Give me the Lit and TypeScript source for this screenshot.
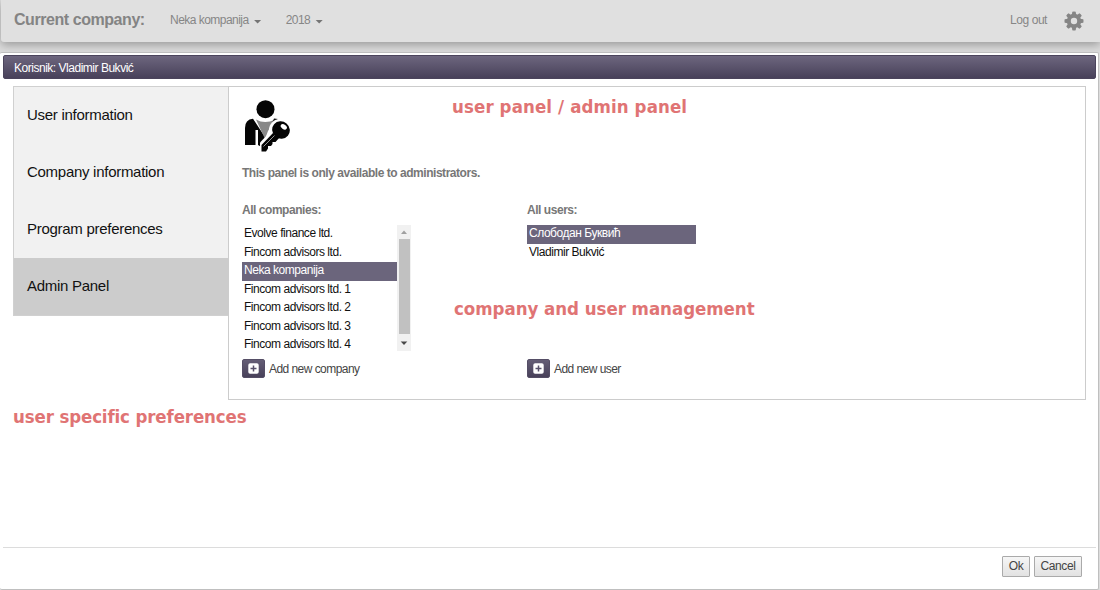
import { LitElement, html, css, svg } from "lit";
import { customElement, property, state } from "lit/decorators.js";
import { classMap } from "lit/directives/class-map.js";

const gearTeeth = [0, 45, 90, 135, 180, 225, 270, 315];

@customElement("item-list")
class ItemList extends LitElement {
  @property({ attribute: false }) items: string[] = [];
  @property({ type: Number }) selected = 0;
  @property({ type: Boolean }) scroll = false;

  static styles = css`
    :host { display: flex; height: 127px; }
    .rows { flex: 1; overflow: hidden; }
    .row { height: 18.5px; line-height: 17px; padding-left: 2px; font-size: 12px; letter-spacing: -0.46px; color: #111; white-space: nowrap; box-sizing: border-box; }
    .row.selected { background: #6b657c; color: #fff; }
    .bar { width: 14px; height: 126px; background: #f1f1f1; display: flex; flex-direction: column; align-items: center; }
    .thumb { width: 11px; height: 95px; background: #c1c1c1; }
    .arrow { display: block; width: 14px; height: 14px; }
    .last { height: 17px; }
  `;

  render() {
    return html`
      <div class="rows">
        ${this.items.map((t, i) => html`<div class=${classMap({ row: true, selected: i === this.selected })} @click=${() => (this.selected = i)}>${t}</div>`)}
      </div>
      ${this.scroll
        ? html`<div class="bar">
            <svg class="arrow" viewBox="0 0 14 14"><path d="M4 9 7 5.5 10 9z" fill="#a0a0a0" /></svg>
            <div class="thumb"></div>
            <svg class="arrow last" viewBox="0 0 14 17"><path d="M3.7 7.5h6.6L7 11z" fill="#484848" /></svg>
          </div>`
        : ""}
    `;
  }
}

@customElement("add-button")
class AddButton extends LitElement {
  @property() label = "";

  static styles = css`
    :host { display: flex; align-items: center; height: 19px; }
    .box { width: 23px; height: 19px; border-radius: 2px; background: linear-gradient(#645d75, #48415a); border: 1px solid #554e66; box-sizing: border-box; display: flex; align-items: center; justify-content: center; }
    .plus { display: block; width: 11px; height: 11px; }
    .label { margin-left: 4px; padding-top: 2px; font-size: 12px; letter-spacing: -0.55px; color: #444; line-height: 19px; white-space: nowrap; }
  `;

  render() {
    return html`
      <div class="box"><svg class="plus" viewBox="0 0 11 11"><rect x=".3" y=".3" width="10.4" height="10.4" rx="1.8" fill="#fff" /><path d="M5.5 2.5v6M2.5 5.5h6" stroke="#57506a" stroke-width="1.5" /></svg></div>
      <span class="label">${this.label}</span>
    `;
  }
}

@customElement("app-root")
class AppRoot extends LitElement {
  @state() tab = 3;
  tabs = ["User information", "Company information", "Program preferences", "Admin Panel"];
  companies = ["Evolve finance ltd.", "Fincom advisors ltd.", "Neka kompanija", "Fincom advisors ltd. 1", "Fincom advisors ltd. 2", "Fincom advisors ltd. 3", "Fincom advisors ltd. 4"];
  users = ["Слободан Буквић", "Vladimir Bukvić"];

  static styles = css`
    :host { display: flex; flex-direction: column; position: relative; width: 1100px; height: 590px; overflow: hidden; background: #dcdcdc; font-family: "Liberation Sans", Arial, sans-serif; box-sizing: border-box; }
    .top { height: 42px; flex: none; margin-left: 1px; background: #e0e0e0; border-radius: 0 0 0 3px; box-shadow: 0 3px 10px rgba(0, 0, 0, 0.3); display: flex; align-items: center; padding: 0 16px 2px 13px; box-sizing: border-box; color: #868686; font-size: 12px; }
    .brand { font-weight: bold; font-size: 16px; letter-spacing: -0.44px; width: 156px; color: #848484; }
    .drop { display: flex; align-items: center; letter-spacing: -0.53px; white-space: nowrap; }
    .year { margin-left: 24px; }
    .caret { margin: 3px 0 0 5px; width: 8px; height: 4px; background: #757575; clip-path: polygon(0 0, 100% 0, 50% 100%); }
    .logout { margin-left: auto; letter-spacing: -0.45px; }
    .gear { width: 20px; height: 20px; margin: 1px 0 0 17px; display: block; }
    .dialog { margin: 10px 1px 0 0; height: 538px; flex: none; background: #fff; border: 1px solid #bfbfbf; border-left: 0; border-radius: 2px; box-sizing: border-box; padding: 2px 2px 0 3px; display: flex; flex-direction: column; position: relative; }
    .title { height: 24px; flex: none; box-sizing: border-box; border: 1px solid #4b445c; border-radius: 2px; background: linear-gradient(#6d667e, #48415a); color: #fff; font-size: 12px; letter-spacing: -0.48px; line-height: 24px; padding-left: 10px; white-space: nowrap; }
    .body { display: flex; align-items: flex-start; margin: 7px 10px 0; }
    .tabs { width: 215px; height: 230px; box-sizing: border-box; border: 1px solid #d0d0d0; border-right: 0; background: #f1f1f1; display: grid; grid-template-rows: repeat(4, 57px); }
    .tab { padding-left: 13px; line-height: 55px; font-size: 15px; letter-spacing: -0.28px; color: #111; }
    .tab.active { background: #ccc; }
    .panel { flex: 1; height: 314px; box-sizing: border-box; border: 1px solid #ccc; padding: 12px 13px 0; color: #777; }
    .person { display: block; width: 49px; height: 54px; }
    .strong { font-size: 12px; font-weight: bold; line-height: 14px; letter-spacing: -0.46px; white-space: nowrap; }
    .note { margin-top: 13px; }
    .columns { display: grid; grid-template-columns: 169px 169px; column-gap: 116px; margin-top: 23px; }
    .list { margin: 8px 0 7px; }
    .foot { margin-top: auto; height: 42px; border-top: 1px solid #dcdcdc; display: flex; justify-content: flex-end; padding: 8px 14px 0 0; box-sizing: border-box; gap: 4px; }
    .button { height: 21px; box-sizing: border-box; border: 1px solid #aaa; border-radius: 1px; background: linear-gradient(#f6f6f6, #e2e2e2); color: #444; font-size: 12px; font-family: inherit; padding: 0 0 1px; letter-spacing: -0.4px; }
    .ok { width: 28px; }
    .cancel { width: 48px; }
    .mark { position: absolute; font-family: "DejaVu Sans Condensed", "DejaVu Sans", sans-serif; font-stretch: condensed; font-weight: bold; font-size: 18.5px; line-height: 24px; color: #e07474; white-space: nowrap; font-variant-ligatures: none; }
    .mark-panel { left: 452px; top: 95px; letter-spacing: 0.11px; }
    .mark-manage { left: 454px; top: 297px; letter-spacing: -0.03px; }
    .mark-prefs { left: 13px; top: 405px; letter-spacing: -0.13px; }
  `;

  render() {
    return html`
      <header class="top">
        <span class="brand">Current company:</span>
        <span class="drop">Neka kompanija<i class="caret"></i></span>
        <span class="drop year">2018<i class="caret"></i></span>
        <span class="logout">Log out</span>
        <svg class="gear" viewBox="0 0 20 20" fill="#858585">
          ${gearTeeth.map((a) => svg`<path d="M7.8 4 8.3.7Q10 .2 11.7.7L12.2 4z" transform="rotate(${a} 10 10)" />`)}
          <circle cx="10" cy="10" r="5.2" fill="none" stroke="#858585" stroke-width="4" />
        </svg>
      </header>
      <main class="dialog">
        <div class="title">Korisnik: Vladimir Bukvić</div>
        <div class="body">
          <nav class="tabs">
            ${this.tabs.map((t, i) => html`<div class=${classMap({ tab: true, active: i === this.tab })} @click=${() => (this.tab = i)}>${t}</div>`)}
          </nav>
          <section class="panel">
            <svg class="person" viewBox="0 0 49 54">
              <circle cx="23.5" cy="10.2" r="9" fill="#050505" />
              <path d="M3 46V29Q3 20.5 11 19.8L23 38V50L16 46V31H13.5V46z" fill="#050505" />
              <path d="M14 20.5q9 5 19 0L26 32l-3 8z" fill="#888" />
              <path d="M32 19.5l4 .5-4 4-4 5z" fill="#111" />
              <circle cx="38" cy="31" r="11" fill="#fff" />
              <path d="M29 32 18 43.5V54h10L42 40z" fill="#fff" />
              <ellipse cx="39" cy="31" rx="9" ry="8.6" transform="rotate(40 39 31)" fill="#050505" />
              <path d="M31 34 19.5 46v6.5h4.5l2-3v-2.5h3l1.5-2V43h3l4-4.5z" fill="#050505" />
              <path d="M32.5 36.5 21.5 47.5" stroke="#bbb" stroke-width=".8" />
              <ellipse cx="41.8" cy="27.8" rx="3.4" ry="2.3" transform="rotate(35 41.8 27.8)" fill="#fff" />
            </svg>
            <div class="strong note">This panel is only available to administrators.</div>
            <div class="columns">
              <div>
                <div class="strong">All companies:</div>
                <item-list class="list" .items=${this.companies} .selected=${2} .scroll=${true}></item-list>
                <add-button label="Add new company"></add-button>
              </div>
              <div>
                <div class="strong">All users:</div>
                <item-list class="list" .items=${this.users} .selected=${0}></item-list>
                <add-button label="Add new user"></add-button>
              </div>
            </div>
          </section>
        </div>
        <footer class="foot">
          <button class="button ok">Ok</button>
          <button class="button cancel">Cancel</button>
        </footer>
      </main>
      <div class="mark mark-panel">user panel / admin panel</div>
      <div class="mark mark-manage">company and user management</div>
      <div class="mark mark-prefs">user specific preferences</div>
    `;
  }
}
